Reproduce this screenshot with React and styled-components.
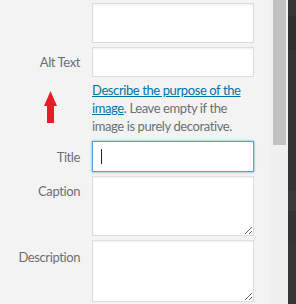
import React from "react";
import styled, { createGlobalStyle } from "styled-components";

const Global = createGlobalStyle`
  html, body { margin: 0; padding: 0; }
  body {
    font-family: Lato, "Noto Sans", sans-serif;
    background: #f3f3f3;
  }
`;

const Screen = styled.div`
  display: flex;
  width: 296px;
  height: 304px;
  overflow: hidden;
`;

const Panel = styled.div`
  flex: 1;
  background: #f3f3f3;
  padding-top: 3px;
`;

const Form = styled.div`
  display: grid;
  grid-template-columns: 80px 162px;
  column-gap: 12px;
  row-gap: 4px;
`;

const Label = styled.label`
  font-size: 13px;
  letter-spacing: -0.4px;
  color: #6c7075;
  text-align: right;
  line-height: 18px;
  padding-top: ${(p) => p.$top || 6}px;
`;

const Field = styled.div`
  box-sizing: border-box;
  height: ${(p) => p.$h}px;
  background: #fff;
  border: 1px solid ${(p) => (p.$focus ? "#5b9dd9" : "#ddd")};
  box-shadow: ${(p) =>
    p.$focus ? "0 0 2px rgba(30,140,190,0.8)" : "inset 0 1px 2px rgba(0,0,0,0.07)"};
  padding: 6px 8px;
  display: flex;
  align-items: center;
`;

const Area = styled.textarea`
  box-sizing: border-box;
  display: block;
  width: 162px;
  height: ${(p) => p.$h}px;
  margin: 0;
  background: #fff;
  border: 1px solid #ddd;
  border-radius: 0;
  box-shadow: inset 0 1px 2px rgba(0,0,0,0.07);
  resize: vertical;
  outline: none;
`;

const Caret = styled.span`
  display: inline-block;
  width: 1px;
  height: 15px;
  background: #222;
`;

const ArrowCell = styled.div`
  display: flex;
  justify-content: flex-end;
  padding-right: 23px;
  padding-top: 10px;
`;

const Help = styled.p`
  margin: 0 0 2px;
  font-size: 13px;
  letter-spacing: -0.4px;
  line-height: 18px;
  color: #6c7075;
`;

const Link = styled.a`
  color: #0073aa;
  text-decoration: underline;
`;

const Track = styled.div`
  width: 17px;
  background: #f0f0f0;
  display: flex;
  justify-content: center;
`;

const Thumb = styled.div`
  width: 13px;
  height: 145px;
  background: #c1c1c1;
`;

const Edge = styled.div`
  width: 8px;
  background: #343434;
  display: flex;
  flex-direction: column;
`;

const EdgeBit = styled.div`
  height: ${(p) => p.$h}px;
  background: ${(p) => p.$c};
`;

const Arrow = () => (
  <svg width="13" height="32" viewBox="0 0 13 32">
    <path d="M6.5 0 L13 15 L10 15 L10 32 L3 32 L3 15 L0 15 Z" fill="#e81c24" />
  </svg>
);

export default function App() {
  return (
    <Screen>
      <Global />
      <Panel>
        <Form>
          <span />
          <Field $h={40} />
          <Label $top={6}>Alt Text</Label>
          <Field $h={30} />
          <ArrowCell>
            <Arrow />
          </ArrowCell>
          <Help>
            <Link>Describe the purpose of the image</Link>. Leave empty if the image is
            purely decorative.
          </Help>
          <Label $top={7}>Title</Label>
          <Field $h={31} $focus>
            <Caret />
          </Field>
          <Label $top={6}>Caption</Label>
          <Area $h={60} />
          <Label $top={8}>Description</Label>
          <Area $h={62} />
        </Form>
      </Panel>
      <Track>
        <Thumb />
      </Track>
      <Edge>
        <EdgeBit $h={16} $c="#363636" />
        <EdgeBit $h={35} $c="#2f2f2f" />
        <EdgeBit $h={144} $c="#353535" />
        <EdgeBit $h={20} $c="#3a3a3a" />
        <EdgeBit $h={35} $c="#333333" />
        <EdgeBit $h={60} $c="#363636" />
      </Edge>
    </Screen>
  );
}
